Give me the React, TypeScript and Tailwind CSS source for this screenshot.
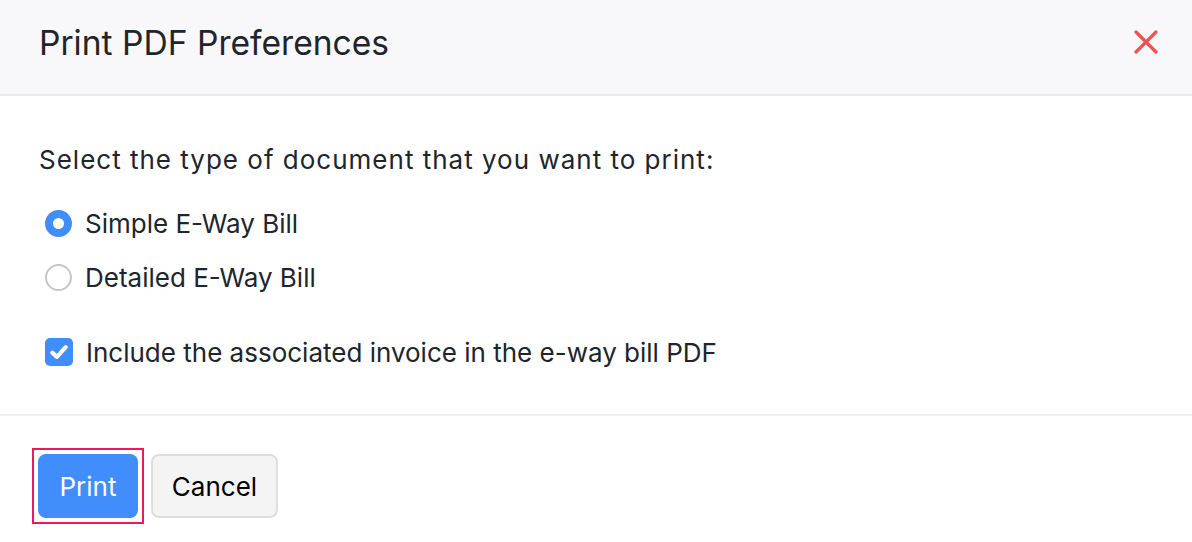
import React, { useState } from 'react';

type DocType = 'simple' | 'detailed';

const Radio: React.FC<{ checked: boolean; label: string; onSelect: () => void }> = ({ checked, label, onSelect }) => (
  <label className="flex items-center gap-[13px] cursor-pointer h-[54px]" onClick={onSelect}>
    <span
      className={`ml-[6px] w-[27px] h-[27px] rounded-full box-border ${
        checked ? 'border-[8px] border-[#408dfb] bg-white' : 'border-2 border-[#c6c6c6] bg-white'
      }`}
    />
    <span className="text-[26px] text-[#21252b]">{label}</span>
  </label>
);

export default function App() {
  const [docType, setDocType] = useState<DocType>('simple');
  const [includeInvoice, setIncludeInvoice] = useState(true);

  return (
    <div className="w-[1192px] h-[542px] bg-white font-['Inter','Noto_Sans',sans-serif] text-[#21252b] overflow-hidden">
      {/* Header */}
      <div className="h-[96px] bg-[#f8f8fa] border-b-2 border-[#ebebef] flex items-center justify-between pl-[39px] pr-[34px]">
        <h2 className="text-[33.6px] leading-none text-[#21252b] pb-[8px]">Print PDF Preferences</h2>
        <button className="w-[24px] h-[24px] flex items-center justify-center mb-[10px]">
          <svg width="24" height="24" viewBox="0 0 24 24" fill="none" stroke="#f25151" strokeWidth="3.2" strokeLinecap="round">
            <path d="M2 2 L22 22 M22 2 L2 22" />
          </svg>
        </button>
      </div>

      {/* Body */}
      <div className="h-[320px] border-b-2 border-[#efeff1] pl-[39px] pt-[46px]">
        <p className="text-[26px] leading-[36px] tracking-[1px]">Select the type of document that you want to print:</p>
        <div className="mt-[18px]">
          <Radio checked={docType === 'simple'} label="Simple E-Way Bill" onSelect={() => setDocType('simple')} />
          <Radio checked={docType === 'detailed'} label="Detailed E-Way Bill" onSelect={() => setDocType('detailed')} />
        </div>
        <label className="flex items-center gap-[13px] mt-[34px] h-[28px] cursor-pointer" onClick={() => setIncludeInvoice(!includeInvoice)}>
          <span
            className={`ml-[6px] w-[28px] h-[28px] rounded-[5px] flex items-center justify-center ${
              includeInvoice ? 'bg-[#408dfb]' : 'border-2 border-[#c6c6c6]'
            }`}
          >
            {includeInvoice && (
              <svg width="22" height="22" viewBox="0 0 18 18" fill="none" stroke="white" strokeWidth="3.4" strokeLinecap="round" strokeLinejoin="round">
                <path d="M3.5 9.5 L7.3 13 L14.5 5" />
              </svg>
            )}
          </span>
          <span className="text-[26px]">Include the associated invoice in the e-way bill PDF</span>
        </label>
      </div>

      {/* Footer */}
      <div className="flex items-center gap-[7px] pl-[32px] pt-[32px]">
        <div className="border-2 border-[#f0185a] p-[4px]">
          <button className="w-[100px] h-[64px] rounded-[8px] bg-[#408dfb] text-white text-[26px]">Print</button>
        </div>
        <button className="w-[127px] h-[64px] rounded-[8px] bg-[#f4f4f4] border-2 border-[#dedede] text-[26px] text-black">
          Cancel
        </button>
      </div>
    </div>
  );
}
